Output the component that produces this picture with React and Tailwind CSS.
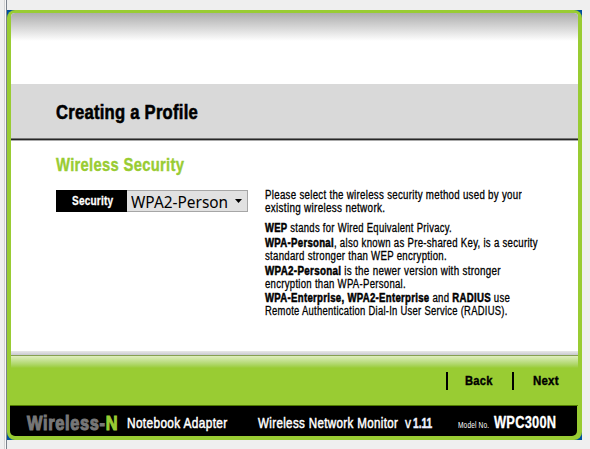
import { useLayoutEffect, useRef, useState } from "react";

// A single line of text condensed horizontally to a given width.
function Fit({ width, className = "", children }) {
  const ref = useRef(null);
  const [scale, setScale] = useState(1);
  useLayoutEffect(() => {
    setScale(width / ref.current.offsetWidth);
  }, [width]);
  return (
    <span className={`block shrink-0 whitespace-nowrap ${className}`} style={{ width }}>
      <span ref={ref} className="inline-block origin-left" style={{ transform: `scaleX(${scale})` }}>
        {children}
      </span>
    </span>
  );
}

function Heavy({ children }) {
  return <b className="font-bold [-webkit-text-stroke:0.5px_#000]">{children}</b>;
}

const lines = [
  { width: 257, gap: "mt-px", text: "Please select the wireless security method used by your" },
  { width: 120, gap: "mt-0", text: "existing wireless network." },
  { width: 187, gap: "mt-[7px]", text: <><Heavy>WEP</Heavy> stands for Wired Equivalent Privacy.</> },
  { width: 273, gap: "mt-[2px]", text: <><Heavy>WPA-Personal</Heavy>, also known as Pre-shared Key, is a security</> },
  { width: 182, gap: "mt-0", text: "standard stronger than WEP encryption." },
  { width: 236, gap: "mt-[2px]", text: <><Heavy>WPA2-Personal</Heavy> is the newer version with stronger</> },
  { width: 141, gap: "mt-0", text: "encryption than WPA-Personal." },
  { width: 245, gap: "mt-px", text: <><Heavy>WPA-Enterprise, WPA2-Enterprise</Heavy> and <Heavy>RADIUS</Heavy> use</> },
  { width: 243, gap: "mt-0", text: "Remote Authentication Dial-In User Service (RADIUS)." },
];

export default function App() {
  return (
    <div className="flex h-[449px] w-[590px] overflow-hidden bg-[#efefef] font-['Liberation_Sans_Narrow','Liberation_Sans',sans-serif] text-black">
      <div className="w-[4px]" />
      <div className="w-px bg-[#d2d2d2]" />
      <div className="w-px bg-[#f8f8f8]" />
      <div className="w-px bg-[#7b828c]" />
      <div className="mt-[10px] h-[430px] w-[575px] bg-[#00509f]">
        <div className="flex h-full flex-col rounded-[8px] bg-[#9c3] pt-[3px]">
          <main className="mr-[4px] ml-[4px] flex h-[342px] flex-col overflow-hidden rounded-t-[4px] bg-white">
            <div className="h-[28px] bg-linear-to-b from-[#adadad] to-white" />
            <div className="h-[43px]" />
            <header className="flex h-[54px] items-center bg-[#d9d9d9] pt-[2px] pl-[45px]">
              <Fit width={142} className="text-[20px] leading-[20px] font-bold tracking-[0.015em] [-webkit-text-stroke:0.6px_#000]">Creating a Profile</Fit>
            </header>
            <div className="h-px bg-[#777]" />
            <div className="h-px bg-[#262626]" />
            <div className="h-px bg-[#aaa]" />
            <div className="h-[210px] pt-[14px] pl-[45px]">
              <Fit width={128.5} className="text-[19px] leading-[20px] font-bold tracking-[0.02em] text-[#9c3] [-webkit-text-stroke:0.4px_#9c3]">Wireless Security</Fit>
              <div className="mt-[13px] flex">
                <div className="mt-[2px] flex h-[22px] w-[192px] border border-[#a6a6a6] bg-[#e1e1e1]">
                  <div className="-mt-px -ml-px flex h-[22px] w-[71px] items-center bg-black pl-[16px] text-white">
                    <Fit width={41} className="text-[12.5px] leading-[20px] font-bold tracking-[0.02em] [-webkit-text-stroke:0.3px_#fff]">Security</Fit>
                  </div>
                  <div className="flex items-center pt-[1px] pl-[4px] font-['Noto_Sans',sans-serif]">
                    <Fit width={97} className="text-[17px] leading-[20px]">WPA2-Person</Fit>
                  </div>
                  <div className="mt-[8px] ml-[7px] h-[4px] w-[7px] bg-black [clip-path:polygon(0_0,100%_0,50%_100%)]" />
                </div>
                <div className="ml-[17px] text-[12px] tracking-[0.03em]">
                  {lines.map((l, i) => (
                    <Fit key={i} width={l.width} className={`h-[13px] leading-[13px] [-webkit-text-stroke:0.3px_#000] ${l.gap}`}>{l.text}</Fit>
                  ))}
                </div>
              </div>
            </div>
            <div className="h-[4px] bg-linear-to-b from-[#e8e8e8] to-[#c9c9d0]" />
          </main>
          <div className="mr-[4px] ml-[4px] h-px shrink-0 bg-[#86a052]" />
          <nav className="mr-[4px] ml-[4px] flex h-[49px] shrink-0 bg-linear-to-b from-[#dfedbd] to-[#9c3] to-[12px] pt-[16px] pl-[435px]">
            <div className="h-[18px] w-[2px] bg-black" />
            <Fit width={27.5} className="ml-[17px] text-[13px] leading-[18px] font-bold tracking-[0.02em] [-webkit-text-stroke:0.4px_#000]">Back</Fit>
            <div className="ml-[19.5px] h-[18px] w-[2px] bg-black" />
            <Fit width={25.5} className="ml-[18.5px] text-[13px] leading-[18px] font-bold tracking-[0.02em] [-webkit-text-stroke:0.4px_#000]">Next</Fit>
          </nav>
          <div className="mr-[4px] ml-[3px] h-px shrink-0 bg-[#4f7a00]" />
          <footer className="mr-[5px] ml-[3px] flex h-[30px] shrink-0 items-center rounded-b-[5px] bg-black pt-[4px] pl-[17px] text-white">
            <Fit width={91} className="text-[20px] leading-[20px] font-bold tracking-[0.04em] text-[#777] [-webkit-text-stroke:1.1px_#777]">
              Wireless-<span className="text-[#9c3] [-webkit-text-stroke:1.1px_#9c3]">N</span>
            </Fit>
            <Fit width={100.5} className="ml-[9px] text-[14.5px] leading-[20px] tracking-[0.03em] [-webkit-text-stroke:0.5px_#fff]">Notebook Adapter</Fit>
            <Fit width={140.5} className="ml-[30.5px] text-[14.5px] leading-[20px] tracking-[0.03em] [-webkit-text-stroke:0.5px_#fff]">Wireless Network Monitor</Fit>
            <Fit width={6} className="ml-[6.5px] text-[14px] leading-[20px] [-webkit-text-stroke:0.4px_#fff]">v</Fit>
            <Fit width={19} className="ml-[2px] text-[15px] leading-[20px] font-bold text-[#eef2ff] [-webkit-text-stroke:0.5px_#eef2ff]">1.11</Fit>
            <Fit width={31} className="ml-[26px] pt-[5px] text-[8.5px] leading-[15px] tracking-[0.02em]">Model No.</Fit>
            <Fit width={62.5} className="ml-[5px] text-[16px] leading-[20px] font-bold tracking-[0.02em] [-webkit-text-stroke:0.3px_#fff]">WPC300N</Fit>
          </footer>
        </div>
      </div>
    </div>
  );
}
